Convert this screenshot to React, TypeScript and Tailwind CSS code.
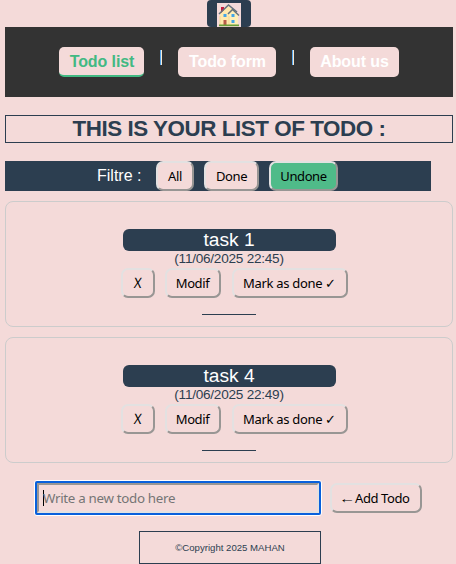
import type { ReactNode } from "react";

function Btn({ className = "", children }: { className?: string; children: ReactNode }) {
  return (
    <button
      className={`flex shrink-0 items-center justify-center whitespace-nowrap rounded-[7px] border-2 border-t-[#e3e1e1] border-l-[#e3e1e1] border-r-[#989694] border-b-[#989694] pt-px font-['Noto_Sans',sans-serif] text-[13px] leading-none tracking-[-0.4px] text-black ${className}`}
    >
      {children}
    </button>
  );
}

function House() {
  return (
    <svg className="h-6 w-6" viewBox="0 0 24 24">
      <path d="M4 4h3v6H4z" fill="#c41d3d" />
      <path d="M3 11 11 3l5 4 5 5v10H3z" fill="#ffe9ad" />
      <path d="M12 12 16 8l5 4v10h-9z" fill="#ffefb9" />
      <path d="M3 13v9M12 13v9" stroke="#f2d996" />
      <path d="M2 11 11.5 2 20 9" fill="none" stroke="#66737c" strokeWidth="1.6" />
      <path d="m11 11 4.500-4.500 6.500 6" fill="none" stroke="#66737c" strokeWidth="1.500" />
      <path d="M6.500 11h3v3h-3zM14.500 11h3v3h-3zM14.500 17h3v3h-3z" fill="#42a5e8" />
      <path d="M6.500 17h3v5h-3z" fill="#b75b48" />
      <path d="M2 21.500h20v1.700H2z" fill="#689f38" />
    </svg>
  );
}

function Card({ title, date }: { title: string; date: string }) {
  return (
    <article className="flex h-[126px] w-[448px] flex-col items-center rounded-lg border border-[#cccccc] pt-[27px]">
      <h2 className="h-[22px] w-[213px] rounded-md bg-[#2c3e50] text-center text-[19.2px] leading-[22px] text-white">{title}</h2>
      <p className="h-[17px] text-[13.6px] leading-[15px] tracking-[-0.25px]">{date}</p>
      <div className="ml-[10px] flex w-[227px] gap-2.5">
        <Btn className="h-[30px] w-[34px]"><span className="inline-block -skew-x-6 scale-y-110">X</span></Btn>
        <Btn className="h-[30px] w-[56px]">Modif</Btn>
        <Btn className="ml-px h-[30px] w-[116px]"><span className="tracking-[-0.3px]">Mark as done ✓</span></Btn>
      </div>
      <div className="mt-4 h-px w-[54px] bg-[#2c3e50]" />
    </article>
  );
}

export default function App() {
  return (
    <div className="h-[564px] w-[456px] overflow-hidden bg-[#f4dad9] pl-[5px] font-['Liberation_Sans',Arial,sans-serif] text-[#2c3e50]">
      <header className="ml-[202px] flex h-[27px] w-[44px] items-end justify-center rounded-[4px] bg-[#2c3e50]">
        <div className="h-6 w-6 bg-[#f4dad9]"><House /></div>
      </header>
      <nav className="flex h-[70px] w-[448px] items-start bg-[#333333] pl-[54px] pt-5 text-base font-bold leading-[30px] tracking-[-0.1px] text-white">
        <a className="h-[30px] w-[85px] rounded-[5px] border-b-2 border-[#42b983] bg-[#f4dad9] pl-px text-center text-[#42b983]">Todo list</a>
        <span className="ml-4 mt-[3px] h-[15px] w-0.5 border-l border-r border-l-[#56a7ee] border-r-[#f6ead3]" />
        <a className="ml-4 h-[30px] w-[98px] rounded-[5px] bg-[#f4dad9] pl-px text-center">Todo form</a>
        <span className="ml-4 mt-[3px] h-[15px] w-0.5 border-l border-r border-l-[#56a7ee] border-r-[#f6ead3]" />
        <a className="ml-4 h-[30px] w-[89px] rounded-[5px] bg-[#f4dad9] text-center">About us</a>
      </nav>
      <h1 className="mt-[18px] h-7 w-[448px] whitespace-nowrap border border-[#2c3e50] text-center text-[22.4px] font-bold leading-[26px] tracking-[-0.45px]">THIS IS YOUR LIST OF TODO :</h1>
      <section className="mt-[18px] flex h-[30px] w-[426px] items-start bg-[#2c3e50] pl-[92px] text-white">
        <span className="w-[59px] whitespace-pre text-base leading-[29px]">Filtre :</span>
        <Btn className="h-[30px] w-[38px] bg-[#f4dad9]">All</Btn>
        <Btn className="ml-2.5 h-[30px] w-[55px] bg-[#f4dad9]">Done</Btn>
        <Btn className="ml-2.5 h-[30px] w-[69px] bg-[#4fbb89]">Undone</Btn>
      </section>
      <main className="mt-2.5 flex flex-col gap-2.5">
        <Card title="task 1" date="(11/06/2025 22:45)" />
        <Card title="task 4" date="(11/06/2025 22:49)" />
      </main>
      <form className="ml-[29px] mt-[17px] flex h-9 items-center">
        <div className="h-9 w-[288px] rounded-[3px] border border-white">
          <div className="h-[34px] rounded-[2px] border-2 border-[#0860dc]">
            <div className="flex h-[30px] items-center border-2 border-t-[#989694] border-l-[#989694] border-r-[#e3e1e1] border-b-[#e3e1e1] pl-1 font-['Noto_Sans',sans-serif] text-[13.33px] leading-none tracking-[-0.3px] text-[#757575]">
              <span className="-mr-px h-4 w-px bg-black" />
              <span className="pt-[2px]">Write a new todo here</span>
            </div>
          </div>
        </div>
        <Btn className="ml-2 h-[30px] w-[92px]"><span className="inline-block origin-right scale-x-125">←</span><span>Add Todo</span></Btn>
      </form>
      <footer className="ml-[134px] mt-[15px] h-[33px] w-[182px] border border-[#2c3e50] text-center text-[9.6px] leading-[32px]">©Copyright 2025 MAHAN</footer>
    </div>
  );
}
